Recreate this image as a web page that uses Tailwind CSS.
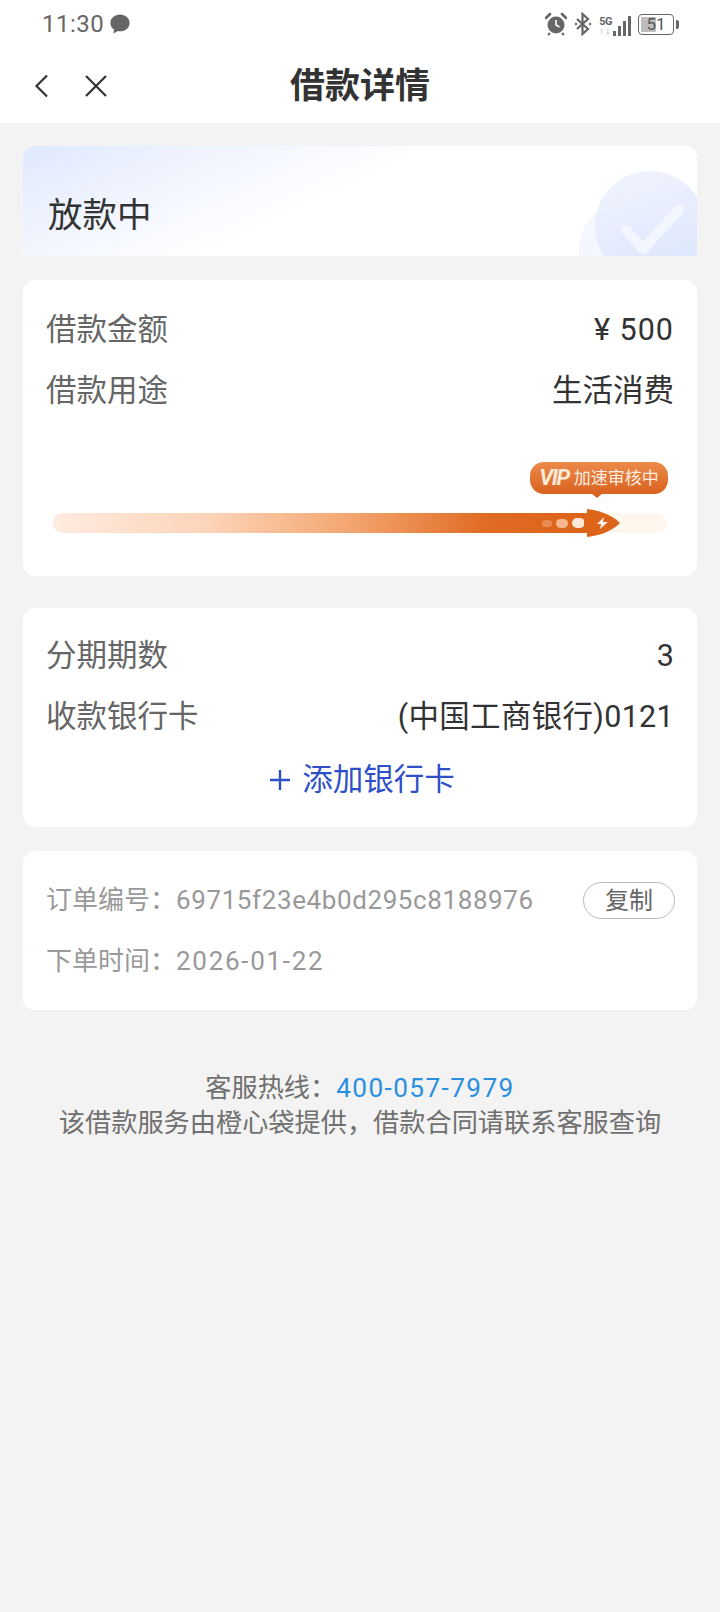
<!DOCTYPE html>
<html lang="zh-CN">
<head>
    <meta charset="UTF-8">
    <meta name="viewport" content="width=device-width, initial-scale=1.0">
    <title>借款详情</title>
    <script src="https://cdn.jsdelivr.net/npm/@tailwindcss/browser@4"></script>
</head>
<body class="w-[720px] h-[1612px] overflow-hidden bg-[#f3f3f3] font-['Roboto','Noto_Sans_CJK_SC',sans-serif] text-[#333333]">
    <!-- status bar + nav -->
    <header class="bg-white h-[123px]">
        <div class="h-[48px] flex items-center justify-between pl-[42px] pr-[41px] text-[#666666]">
            <div class="flex items-center gap-[6px]">
                <span class="text-[24px] tracking-[0.5px] leading-none">11:30</span>
                <svg width="20" height="20" viewBox="0 0 20 20"><path fill="#666666" d="M10 0.5c5.4 0 9.6 3.7 9.6 8.4 0 4.700-4.200 8.400-9.600 8.400-0.800 0-1.500-0.100-2.200-0.200L3.600 19.600l0.300-4C1.700 14 0.400 11.600 0.400 8.900 0.400 4.200 4.600 0.500 10 0.500z"/></svg>
            </div>
            <div class="flex items-center gap-[7px]">
                <svg width="22" height="24" viewBox="0 0 22 24"><circle cx="11" cy="13" r="8.500" fill="#666666"/><path d="M11 8v5l3.500 2" stroke="#fff" stroke-width="1.600" fill="none"/><path d="M1 6l4-4M21 6l-4-4" stroke="#666666" stroke-width="2.600" stroke-linecap="round"/><path d="M5 21l-2 2M17 21l2 2" stroke="#666666" stroke-width="2"/></svg>
                <svg width="18" height="24" viewBox="0 0 18 24"><path d="M3 7l11 10-5.500 5V2L14 7 3 17" stroke="#666666" stroke-width="2.200" fill="none"/><circle cx="2" cy="12" r="1.200" fill="#666666"/><circle cx="16" cy="12" r="1.200" fill="#666666"/></svg>
                <div class="flex items-end h-[24px] gap-[1px]">
                    <div class="flex flex-col leading-none">
                        <span class="text-[11px] font-bold tracking-[-0.5px]">5G</span>
                        <span class="text-[8px] text-[#c4c4c4] leading-[9px]">1↓</span>
                    </div>
                    <div class="flex items-end gap-[2px] h-[22px]">
                        <span class="w-[3px] h-[5px] bg-[#666666]"></span>
                        <span class="w-[3px] h-[10px] bg-[#666666]"></span>
                        <span class="w-[3px] h-[15px] bg-[#666666]"></span>
                        <span class="w-[3px] h-[20px] bg-[#666666]"></span>
                    </div>
                </div>
                <div class="flex items-center gap-[2px]">
                    <div class="relative w-[36px] h-[21px] border-[1.500px] border-[#666666] rounded-[4px] p-[2px]">
                        <div class="w-[51%] h-full bg-[#bdbdbd] rounded-[1px]"></div>
                        <span class="absolute inset-0 flex items-center justify-center text-[17px] leading-none text-[#555555]">51</span>
                    </div>
                    <span class="w-[3px] h-[9px] bg-[#666666] rounded-r-[2px]"></span>
                </div>
            </div>
        </div>
        <nav class="relative h-[75px] flex items-center justify-center pt-[2px]">
            <div class="absolute left-[33px] top-[26px] flex items-center gap-[34px]">
                <svg width="17" height="24" viewBox="0 0 17 24"><path d="M14 1.500L3.500 12 14 22.500" stroke="#333333" stroke-width="2.200" fill="none"/></svg>
                <svg width="24" height="24" viewBox="0 0 24 24"><path d="M2 2l20 20M22 2L2 22" stroke="#333333" stroke-width="2.200" fill="none"/></svg>
            </div>
            <h1 class="text-[35px] font-bold leading-none">借款详情</h1>
        </nav>
    </header>

    <main class="px-[23px] pt-[23px] flex flex-col">
        <!-- status -->
        <section class="relative h-[110px] rounded-t-[12px] overflow-hidden bg-white flex items-center pl-[25px] pt-[28px]">
            <div class="absolute inset-0 bg-[linear-gradient(155deg,#dfe8fd_0%,#eef3fe_20%,#ffffff_46%)]"></div>
            <div class="absolute left-[556px] top-[54px] w-[100px] h-[100px] rounded-full bg-[#f5f7fe]"></div>
            <div class="absolute left-[572px] top-[25px] w-[110px] h-[110px] rounded-full bg-[linear-gradient(160deg,#f2f5fe,#d9e3fc)]"></div>
            <svg class="absolute left-[597px] top-[58px]" width="66" height="52" viewBox="0 0 66 52"><path d="M6 26l17 19L59 6" stroke="#f3f6fe" stroke-width="10" stroke-linecap="round" stroke-linejoin="round" fill="none"/></svg>
            <span class="relative text-[34.500px] leading-none">放款中</span>
        </section>

        <!-- amount + progress -->
        <section class="mt-[24px] h-[296px] bg-white rounded-[12px] px-[23px] pt-[19px]">
            <div class="h-[61px] flex items-center justify-between text-[30.500px]">
                <span class="text-[#666666]">借款金额</span>
                <span class="tracking-[1px]">¥ 500</span>
            </div>
            <div class="h-[61px] flex items-center justify-between text-[30.500px]">
                <span class="text-[#666666]">借款用途</span>
                <span>生活消费</span>
            </div>
            <div class="relative mt-[23px] h-[90px] -mx-[23px]">
                <div class="absolute left-[507px] top-[18px] w-[138px] h-[32px] rounded-[14px] bg-[linear-gradient(180deg,#ec8a4a,#d9621f)] flex items-center justify-center gap-[3px] text-white">
                    <span class="text-[22px] font-bold italic tracking-[-1.500px] leading-none text-[#ffe9d8] pr-[2px]">VIP</span>
                    <span class="text-[17px] leading-none text-[#ffeee2]">加速审核中</span>
                </div>
                <div class="absolute left-[568px] top-[49px] w-0 h-0 border-x-[6px] border-x-transparent border-t-[5px] border-t-[#d9621f]"></div>
                <div class="absolute left-[30px] top-[69px] w-[614px] h-[20px] rounded-full bg-[#fff6ee]"></div>
                <div class="absolute left-[30px] top-[69px] w-[532px] h-[20px] rounded-l-full bg-[linear-gradient(90deg,#ffebe0_0%,#fcd3b7_30%,#f4a772_55%,#df6a22_82%,#dc6418_100%)]"></div>
                <span class="absolute left-[519px] top-[76px] w-[10px] h-[7px] rounded-full bg-[#e98c50]"></span>
                <span class="absolute left-[533px] top-[75px] w-[12px] h-[9px] rounded-full bg-[#f3b68d]"></span>
                <span class="absolute left-[549px] top-[74px] w-[13px] h-[10px] rounded-full bg-[#fde6d6]"></span>
                <svg class="absolute left-[561px] top-[65px]" width="36" height="28" viewBox="0 0 36 28">
                    <path fill="#dd6519" d="M3 0 L3 4 L0 4 L0 24 L3 24 L3 28 C12 27 26 24 36 14 C26 4 12 1 3 0 Z"/>
                    <path fill="#fff3ea" d="M13 15l7-7-1 5h5l-8 7 1-5z"/>
                </svg>
            </div>
        </section>

        <!-- installments -->
        <section class="mt-[32px] h-[219px] bg-white rounded-[12px] px-[23px] pt-[17px]">
            <div class="h-[61px] flex items-center justify-between text-[30.500px]">
                <span class="text-[#666666]">分期期数</span>
                <span>3</span>
            </div>
            <div class="h-[61px] flex items-center justify-between text-[30.500px]">
                <span class="text-[#666666]">收款银行卡</span>
                <span class="tracking-[0.3px]">(中国工商银行)0121</span>
            </div>
            <div class="h-[61px] flex items-center justify-center gap-[12px] text-[30.500px] text-[#2f4fc8] pl-[5px] pt-[4px]">
                <svg width="20" height="20" viewBox="0 0 20 20"><path d="M10 0v20M0 10h20" stroke="#2f4fc8" stroke-width="2.400"/></svg>
                <span>添加银行卡</span>
            </div>
        </section>

        <!-- order info -->
        <section class="mt-[24px] h-[159px] bg-white rounded-[12px] pl-[23px] pr-[22px] pt-[19px] text-[26px] text-[#999999]">
            <div class="h-[61px] flex items-center justify-between">
                <span>订单编号&#65306;<span class="tracking-[0.6px]">69715f23e4b0d295c8188976</span></span>
                <button class="w-[92px] h-[37px] rounded-full border border-[#bbbbbb] text-[24px] leading-none text-[#666666]">复制</button>
            </div>
            <div class="h-[61px] flex items-center">
                <span>下单时间&#65306;<span class="tracking-[1.7px]">2026-01-22</span></span>
            </div>
        </section>

        <footer class="mt-[61px] text-center text-[26.200px] leading-[35px] text-[#707070]">
            <p>客服热线&#65306;<span class="text-[#2b8fe0] tracking-[1.4px]">400-057-7979</span></p>
            <p>该借款服务由橙心袋提供&#65292;借款合同请联系客服查询</p>
        </footer>
    </main>
</body>
</html>
